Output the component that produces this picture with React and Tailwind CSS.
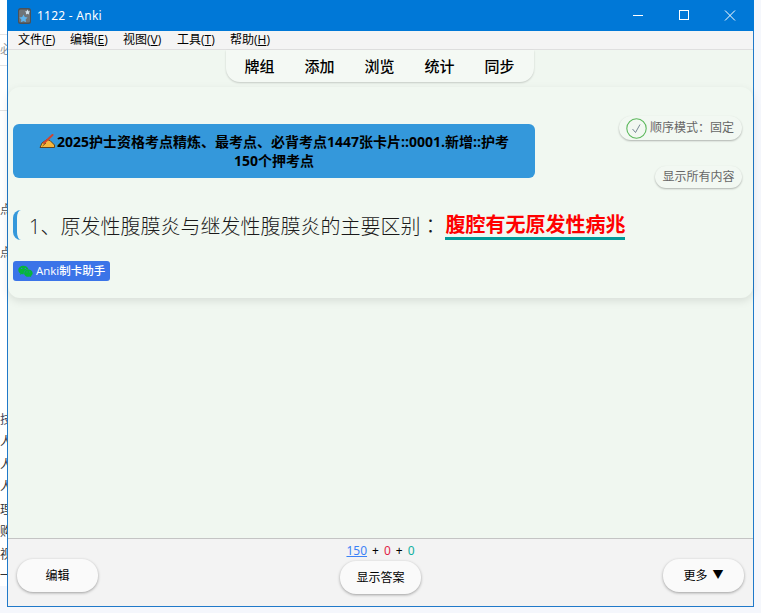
import React from "react";
import { FaWeixin } from "react-icons/fa";

const FONT = "font-['Open_Sans','Noto_Sans_CJK_SC',sans-serif]";

function LeftStrip() {
  const rows = [
    ["h-[34px]", "", ""],
    ["h-[31px] border-t border-[#e3e3e3]", "必", "text-[#999]"],
    ["h-[45px] border-t border-[#e3e3e3]", "", ""],
    ["h-[65px] border-t border-[#e3e3e3]", "", ""],
    ["h-[25px] bg-[#f9f9f9]", "", ""],
    ["h-[20px] bg-[#f9f9f9]", "点", "text-[#555]"],
    ["h-[23px] bg-[#f9f9f9]", "", ""],
    ["h-[19px] bg-[#f9f9f9]", "点", "text-[#555]"],
    ["h-[21px] bg-[#f9f9f9]", "", ""],
    ["h-[13px] bg-[#e9e9e9]", "", ""],
    ["h-[84px]", "", ""],
    ["h-[28px] bg-[#f7f7f7]", "", ""],
    ["h-[23px]", "技", "text-[#445] bg-[#ededed]"],
    ["h-[22px] bg-[#f7f7f7]", "人", "text-[#333]"],
    ["h-[23px] bg-[#f7f7f7]", "人", "text-[#333]"],
    ["h-[22px] bg-[#f7f7f7]", "人", "text-[#333]"],
    ["h-[23px] bg-[#f7f7f7]", "理", "text-[#333]"],
    ["h-[22px] bg-[#f7f7f7]", "购", "text-[#333]"],
    ["h-[23px] bg-[#f7f7f7]", "视", "text-[#333]"],
    ["h-[20px] bg-[#f7f7f7]", "一", "text-[#333]"],
  ];
  return (
    <div className="w-[7px] shrink-0 flex flex-col overflow-hidden">
      {rows.map(([h, t, c], i) => (
        <div key={i} className={`${h} ${c} shrink-0 flex justify-end items-center overflow-hidden text-[12px] leading-[18px] bg-white`}>
          <span className="shrink-0 w-[12px] -mr-[5px]">{t}</span>
        </div>
      ))}
    </div>
  );
}

function AnkiLogo() {
  return (
    <svg width="13" height="16" viewBox="0 0 13 16" className="shrink-0">
      <rect x="0" y="0" width="13" height="16" rx="2.5" fill="#4d5156" />
      <rect x="1" y="1.5" width="11" height="13" rx="1.5" fill="#6f7478" />
      <path d="M9.5 1.5l.8 1.8 1.7.2-1.2 1.3.3 1.8-1.6-.9-1.6.9.3-1.8-1.2-1.3 1.7-.2z" fill="#d5e4ef" />
      <path d="M5.5 6.5l1.3 2.6 2.8.4-2 2 .5 2.8-2.6-1.4-2.6 1.4.5-2.8-2-2 2.8-.4z" fill="#5fb4ee" />
    </svg>
  );
}

function WritingHand() {
  return (
    <svg width="17" height="15" viewBox="0 0 17 15" className="inline-block align-[-2px] mr-px">
      <path d="M1 13.5 L3 9 L8 5.5 L11 6.5 L15.5 11 L15.5 13.5 Z" fill="#f6b73c" stroke="#5a3a12" strokeWidth="0.9" strokeLinejoin="round" />
      <path d="M5 9 L13.5 1" stroke="#d2452e" strokeWidth="2" strokeLinecap="round" />
      <path d="M3.5 12 L7 9" stroke="#5a3a12" strokeWidth="0.8" />
    </svg>
  );
}

function Pill({ children, className = "" }) {
  return (
    <div className={`flex items-center rounded-full bg-[#f2f8f2] shadow-[0_1px_2px_rgba(0,0,0,0.28)] text-[12px] text-[#666] ${className}`}>
      {children}
    </div>
  );
}

function BarButton({ children, className = "" }) {
  return (
    <button className={`h-[33px] w-[81px] rounded-[16px] bg-[#fafafa] shadow-[0_1px_3px_rgba(0,0,0,0.35)] text-[12px] text-black flex items-center justify-center ${className}`}>
      {children}
    </button>
  );
}

export default function App() {
  return (
    <div className={`w-[761px] h-[613px] overflow-hidden flex bg-[#f5f7fc] ${FONT}`}>
      <LeftStrip />
      <div className="w-[747px] h-[607px] shrink-0 flex flex-col border-x border-b border-[#2079c9] bg-[#f0f7f0]">
        <div className="h-[31px] -mx-px shrink-0 bg-[#0078d7] flex items-center text-white pl-[11px]">
          <AnkiLogo />
          <span className="ml-[6px] text-[12px] tracking-[0.25px] font-['Noto_Sans']">1122 - Anki</span>
          <div className="ml-auto mr-px flex items-center">
            <svg width="46" height="31" viewBox="0 0 46 31"><path d="M18 15.5h10" stroke="#fff" strokeWidth="1" /></svg>
            <svg width="46" height="31" viewBox="0 0 46 31"><rect x="18.5" y="10.5" width="9" height="9" fill="none" stroke="#fff" strokeWidth="1" /></svg>
            <svg width="46" height="31" viewBox="0 0 46 31"><path d="M18 10.5l10 10M28 10.5l-10 10" stroke="#fff" strokeWidth="1" /></svg>
          </div>
        </div>
        <div className="h-[19px] shrink-0 bg-[#f4f4f4] border-b border-[#dfdfdf] flex items-center pl-[10px] gap-[15px] text-[12px] text-black">
          <span className="w-[37px] whitespace-nowrap">文件(<span className="underline">F</span>)</span>
          <span className="w-[38px] whitespace-nowrap">编辑(<span className="underline">E</span>)</span>
          <span className="w-[39px] whitespace-nowrap">视图(<span className="underline">V</span>)</span>
          <span className="w-[38px] whitespace-nowrap">工具(<span className="underline">T</span>)</span>
          <span className="w-[38px] whitespace-nowrap">帮助(<span className="underline">H</span>)</span>
        </div>
        <div className="flex-1 min-h-0 flex flex-col">
          <div className="h-[37px] shrink-0 flex justify-center">
            <div className="mr-[2px] w-[308px] h-[32px] rounded-b-[14px] bg-[#f4f9f4] shadow-[0_1px_2px_rgba(0,0,0,0.18)] flex items-center justify-center gap-[30px] text-[15px] font-medium text-black">
              <span>牌组</span><span>添加</span><span>浏览</span><span>统计</span><span>同步</span>
            </div>
          </div>
          <div className="h-[211px] shrink-0 rounded-[12px] bg-[#f1f8f1] shadow-[0_3px_8px_rgba(0,0,0,0.1)] pl-[5px] pr-[11px] flex flex-col">
            <div className="flex pt-[29px] justify-between">
              <div className="w-[522px] h-[54px] mt-[8px] rounded-[6px] bg-[#3498db] text-[14px] font-bold leading-[19px] text-black text-center pt-[8px] px-[20px]">
                <WritingHand />
                <span>2025护士资格考点精炼、最考点、必背考点1447张卡片::0001.新增::护考150个押考点</span>
              </div>
              <div className="flex flex-col items-end gap-[26px]">
                <Pill className="h-[24px] w-[123px] pl-[7px]">
                  <svg width="21" height="21" viewBox="0 0 21 21" className="mr-[3px] shrink-0">
                    <circle cx="10.5" cy="10.5" r="9.7" fill="none" stroke="#5cb85c" strokeWidth="1.1" />
                    <path d="M6.5 11l3 3.5 4.5-8" fill="none" stroke="#6a7a8a" strokeWidth="0.9" />
                  </svg>
                  <span>顺序模式：固定</span>
                </Pill>
                <Pill className="h-[22px] w-[87px] justify-center"><span>显示所有内容</span></Pill>
              </div>
            </div>
            <div className="mt-[22px] h-[30px] flex items-center text-[20px] font-light text-[#1a1a1a] border-l-[4px] border-[#3498db] rounded-l-[8px] pl-[12px]">
              <span className="mt-[2px]">1、原发性腹膜炎与继发性腹膜炎的主要区别<span className="font-['Noto_Sans_CJK_TC']">：</span></span>
              <span className="ml-[5px] font-bold text-[#ff0000] border-b-[3px] border-[#009a9a] leading-[25px] mt-[1px]">腹腔有无原发性病兆</span>
            </div>
            <div className="mt-[21px] w-[97px] h-[20px] rounded-[3px] bg-[#3b74e8] text-white text-[11.5px] font-medium flex items-center pl-[5px]">
              <FaWeixin className="text-[#07b53b] text-[15px] mr-[3px] shrink-0" />
              <span>Anki制卡助手</span>
            </div>
          </div>
          <div className="flex-1" />
        </div>
        <div className="h-[68px] shrink-0 border-t border-[#c4c4c4] bg-[#f3f3f3] flex justify-between px-[9px] items-start">
          <BarButton className="mt-[20px]">编辑</BarButton>
          <div className="flex flex-col items-center">
            <div className="h-[22px] pt-[2px] flex items-center text-[12px] text-black gap-[5px] font-['Noto_Sans']">
              <span className="text-[#3b82f6] underline">150</span><span>+</span><span className="text-[#e11d48]">0</span><span>+</span><span className="text-[#10b0a0]">0</span>
            </div>
            <BarButton>显示答案</BarButton>
          </div>
          <BarButton className="mt-[20px]">更多<span className="ml-[5px] text-[11px]">▼</span></BarButton>
        </div>
      </div>
    </div>
  );
}
